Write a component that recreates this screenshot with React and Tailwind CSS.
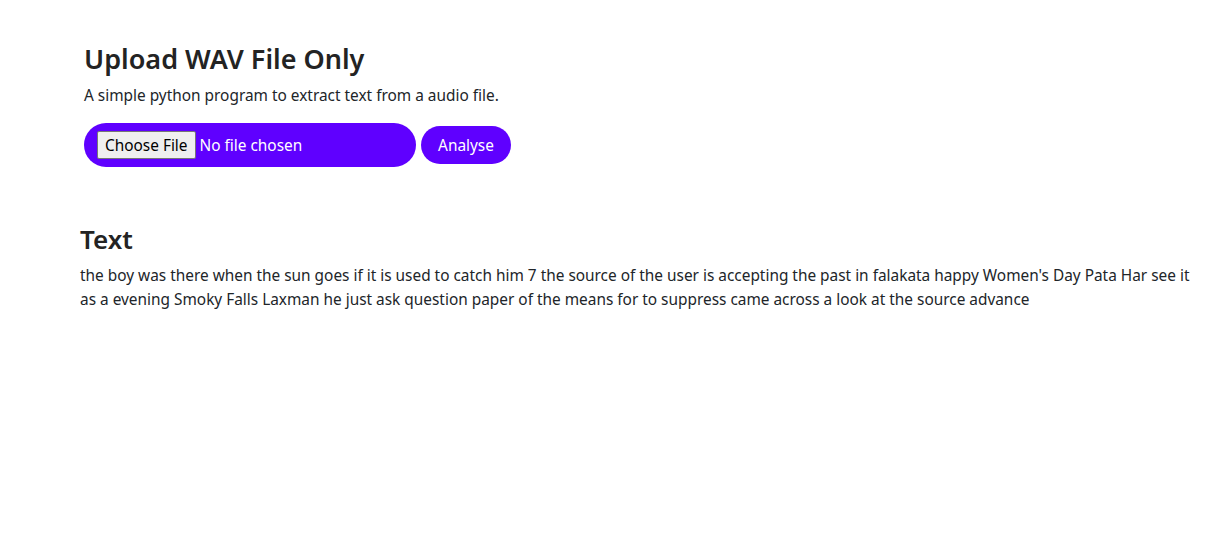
import React from "react";

export default function App() {
  return (
    <div
      className="min-h-screen bg-white text-[#212529]"
      style={{ fontFamily: '"Noto Sans", "Open Sans", sans-serif' }}
    >
      {/* Upload form */}
      <div className="pl-[84px] pt-[43px]">
        <h3 className="text-[27px] font-semibold leading-[1.2] mb-[9px] text-[#232323]">Upload WAV File Only</h3>
        <p className="text-[15.4px] leading-6">A simple python program to extract text from a audio file.</p>
        <div className="flex items-center gap-[5px] mt-[15px]">
          <div className="flex items-center w-[332px] h-[44px] rounded-full bg-[#5f00ff] pl-[13px]">
            <span className="h-[28px] px-[7px] flex items-center bg-[#efefef] border border-[#767676] rounded-[2px] text-black text-[15.4px]">
              Choose File
            </span>
            <span className="ml-[4px] text-white text-[15.4px]">No file chosen</span>
          </div>
          <button className="h-[38px] w-[90px] rounded-full bg-[#5f00ff] text-white text-[15.4px]">Analyse</button>
        </div>
      </div>

      {/* Result */}
      <div className="pl-[80px] pr-[20px] mt-[57px]">
        <h4 className="text-[26px] font-semibold leading-[1.2] mb-[8px] text-[#232323]">Text</h4>
        <p className="text-[15.4px] leading-6 max-w-[1120px]">
          the boy was there when the sun goes if it is used to catch him 7 the source of the user is accepting the past in falakata happy Women's Day Pata Har see it as a evening Smoky Falls Laxman he just ask question paper of the means for to suppress came across a look at the source advance
        </p>
      </div>
    </div>
  );
}
